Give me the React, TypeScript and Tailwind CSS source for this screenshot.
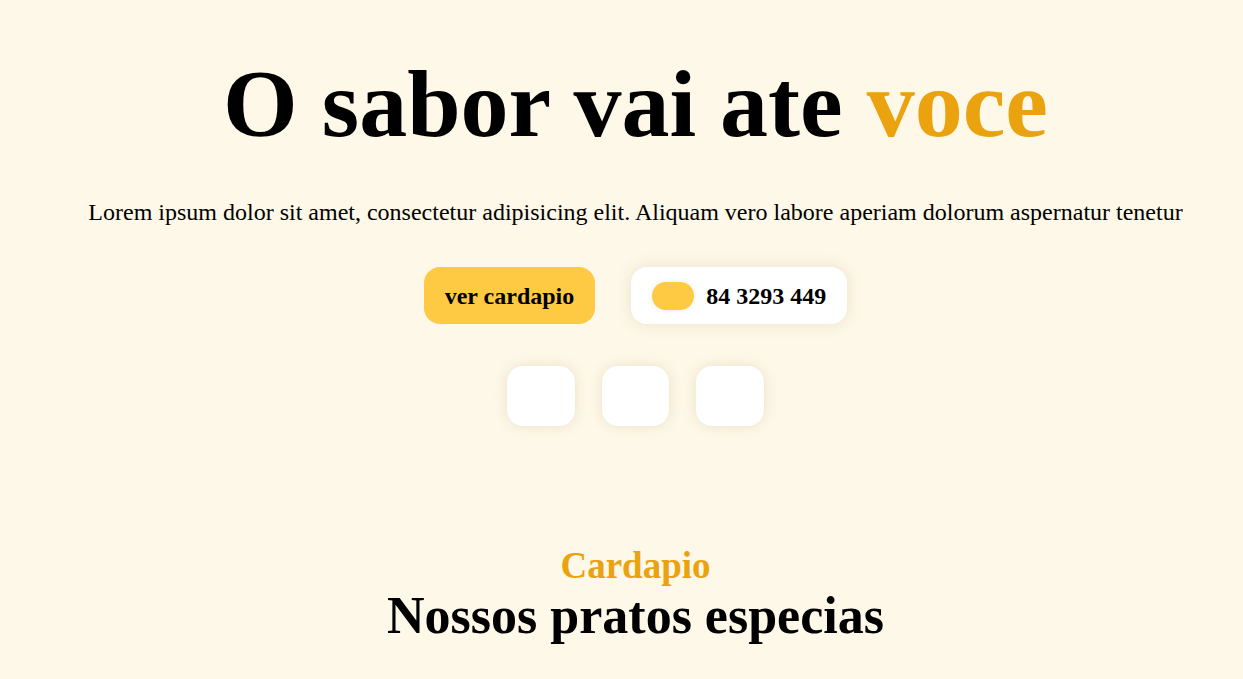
export default function App() {
  return (
    <div className="min-h-screen bg-[#fef8e8] pl-[28px] text-black font-['Liberation_Serif','Times_New_Roman',serif]">
      <section className="flex flex-col items-center pt-[49px]">
        <h1 className="text-[96px] font-bold leading-[1.15]">
          O sabor vai ate <span className="text-[#eaa30f]">voce</span>
        </h1>
        <p className="mt-[38px] text-2xl leading-tight">
          Lorem ipsum dolor sit amet, consectetur adipisicing elit. Aliquam vero labore aperiam dolorum aspernatur tenetur
        </p>
        <div className="mt-[40px] flex items-center gap-9">
          <button className="h-[57px] rounded-2xl bg-[#ffca43] px-[21px] text-2xl font-bold">
            ver cardapio
          </button>
          <div className="flex h-[57px] items-center gap-3 rounded-2xl bg-white px-[21px] shadow-[0_0_16px_rgba(130,105,50,0.16)]">
            <span className="h-7 w-[42px] rounded-full bg-[#ffca43] shadow-[0_0_6px_rgba(0,0,0,0.08)]" />
            <span className="text-2xl font-bold">84 3293 449</span>
          </div>
        </div>
        <div className="mt-[42px] flex gap-[27px]">
          <div className="h-[60px] w-[68px] rounded-2xl bg-white shadow-[0_0_14px_rgba(130,105,50,0.16)]" />
          <div className="h-[60px] w-[67px] rounded-2xl bg-white shadow-[0_0_14px_rgba(130,105,50,0.16)]" />
          <div className="h-[60px] w-[68px] rounded-2xl bg-white shadow-[0_0_14px_rgba(130,105,50,0.16)]" />
        </div>
      </section>
      <section className="mt-[117px] flex flex-col items-center">
        <h3 className="text-[37px] font-bold leading-tight text-[#eaa30f]">Cardapio</h3>
        <h2 className="text-[52px] font-bold leading-none">Nossos pratos especias</h2>
      </section>
    </div>
  );
}
